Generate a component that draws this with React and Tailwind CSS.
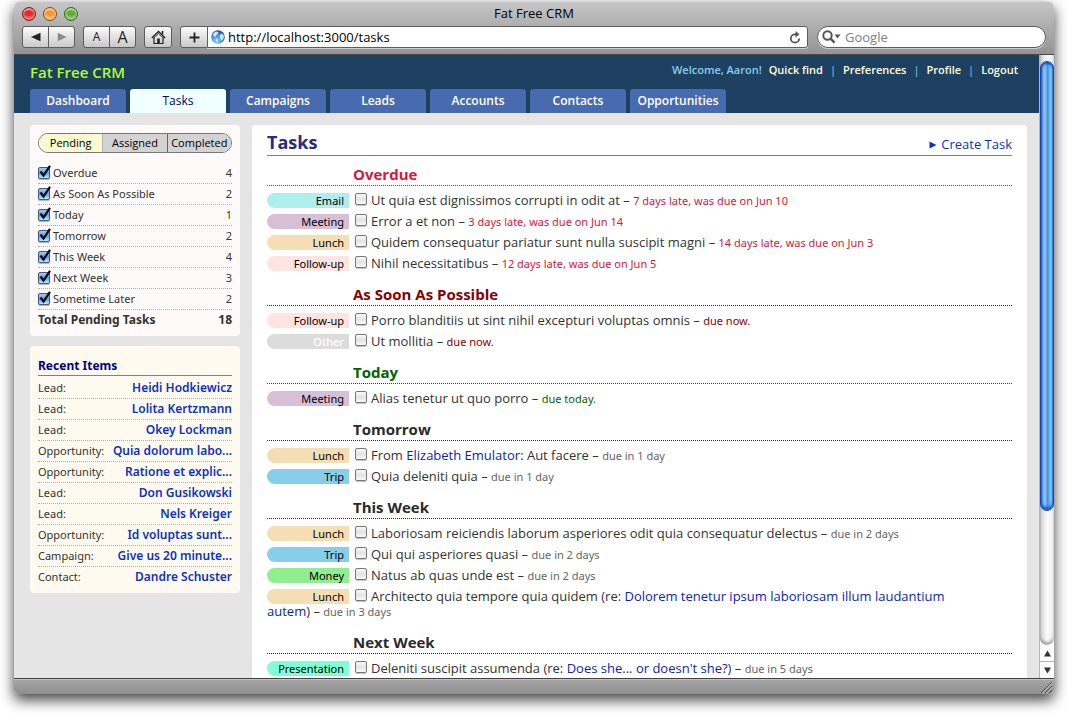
import React from "react";

const NAV = ["Dashboard", "Tasks", "Campaigns", "Leads", "Accounts", "Contacts", "Opportunities"];
const LINKS = ["Quick find", "Preferences", "Profile", "Logout"];

const FILTERS = [
  ["Overdue", 4],
  ["As Soon As Possible", 2],
  ["Today", 1],
  ["Tomorrow", 2],
  ["This Week", 4],
  ["Next Week", 3],
  ["Sometime Later", 2],
];

const RECENT = [
  ["Lead", "Heidi Hodkiewicz"],
  ["Lead", "Lolita Kertzmann"],
  ["Lead", "Okey Lockman"],
  ["Opportunity", "Quia dolorum labo..."],
  ["Opportunity", "Ratione et explic..."],
  ["Lead", "Don Gusikowski"],
  ["Lead", "Nels Kreiger"],
  ["Opportunity", "Id voluptas sunt..."],
  ["Campaign", "Give us 20 minute..."],
  ["Contact", "Dandre Schuster"],
];

const PILL = {
  Email: "bg-[#afeeee] text-black",
  Meeting: "bg-[#d8bfd8] text-black",
  Lunch: "bg-[#f5deb3] text-black",
  "Follow-up": "bg-[#ffe4e1] text-black",
  Other: "bg-[#dcdcdc] font-medium text-white",
  Trip: "bg-[#87ceeb] text-black",
  Money: "bg-[#90ee90] text-black",
  Presentation: "bg-[#7fffd4] text-black",
};

const SECTIONS = [
  {
    title: "Overdue",
    head: "text-[#dc143c] border-[#dc143c]",
    due: "text-[#dc143c]",
    tasks: [
      { type: "Email", text: "Ut quia est dignissimos corrupti in odit at", due: "7 days late, was due on Jun 10" },
      { type: "Meeting", text: "Error a et non", due: "3 days late, was due on Jun 14" },
      { type: "Lunch", text: "Quidem consequatur pariatur sunt nulla suscipit magni", due: "14 days late, was due on Jun 3" },
      { type: "Follow-up", text: "Nihil necessitatibus", due: "12 days late, was due on Jun 5" },
    ],
  },
  {
    title: "As Soon As Possible",
    head: "text-[#8b0000] border-[#8b0000]",
    due: "text-[#8b0000]",
    tasks: [
      { type: "Follow-up", text: "Porro blanditiis ut sint nihil excepturi voluptas omnis", due: "due now." },
      { type: "Other", text: "Ut mollitia", due: "due now." },
    ],
  },
  {
    title: "Today",
    head: "text-[#006400] border-[#006400]",
    due: "text-[#006400]",
    tasks: [{ type: "Meeting", text: "Alias tenetur ut quo porro", due: "due today." }],
  },
  {
    title: "Tomorrow",
    head: "text-[#2a2a2a] border-[#2a2a2a]",
    due: "text-[#666]",
    tasks: [
      { type: "Lunch", text: "From ", link: "Elizabeth Emulator", after: ": Aut facere", due: "due in 1 day" },
      { type: "Trip", text: "Quia deleniti quia", due: "due in 1 day" },
    ],
  },
  {
    title: "This Week",
    head: "text-[#2a2a2a] border-[#2a2a2a]",
    due: "text-[#666]",
    tasks: [
      { type: "Lunch", text: "Laboriosam reiciendis laborum asperiores odit quia consequatur delectus", due: "due in 2 days" },
      { type: "Trip", text: "Qui qui asperiores quasi", due: "due in 2 days" },
      { type: "Money", text: "Natus ab quas unde est", due: "due in 2 days" },
      {
        type: "Lunch",
        text: "Architecto quia tempore quia quidem (re: ",
        link: "Dolorem tenetur ipsum laboriosam illum laudantium autem",
        after: ")",
        due: "due in 3 days",
      },
    ],
  },
  {
    title: "Next Week",
    head: "text-[#2a2a2a] border-[#2a2a2a]",
    due: "text-[#666]",
    tasks: [
      {
        type: "Presentation",
        text: "Deleniti suscipit assumenda (re: ",
        link: "Does she... or doesn't she?",
        after: ")",
        due: "due in 5 days",
      },
    ],
  },
];

const CHROME_BUTTON =
  "flex items-center justify-center border border-[#5c5c5c] bg-linear-to-b from-[#fbfbfb] to-[#c9c9c9] text-[#222]";

function Light({ label, tone }) {
  return (
    <button
      type="button"
      aria-label={label}
      className={`size-3.5 rounded-full border shadow-[inset_0_2px_1px_rgba(255,255,255,0.55),inset_0_-3px_2px_rgba(255,255,255,0.4)] ${tone}`}
    />
  );
}

function Toolbar() {
  return (
    <div className="flex h-[22px] items-stretch gap-2 px-2">
      <div className="flex">
        <button type="button" aria-label="Back" className={`w-[27px] rounded-l-[3px] ${CHROME_BUTTON}`}>
          <svg width="10" height="10" viewBox="0 0 10 10"><path d="M0 5 9.500 .8v8.400z" fill="#222" /></svg>
        </button>
        <button type="button" aria-label="Forward" className={`-ml-px w-[27px] rounded-r-[3px] ${CHROME_BUTTON}`}>
          <svg width="10" height="10" viewBox="0 0 10 10"><path d="M9.500 5 .8 .8v8.400z" fill="#8a8a8a" /></svg>
        </button>
      </div>
      <div className="flex">
        <button type="button" aria-label="Smaller text" className={`w-[27px] rounded-l-[3px] text-[12px] font-medium ${CHROME_BUTTON}`}>A</button>
        <button type="button" aria-label="Larger text" className={`-ml-px w-[27px] rounded-r-[3px] text-[16px] font-medium ${CHROME_BUTTON}`}>A</button>
      </div>
      <button type="button" aria-label="Home" className={`w-7 rounded-[3px] ${CHROME_BUTTON}`}>
        <svg width="15" height="15" viewBox="0 0 15 15" fill="none" stroke="#222">
          <path d="M.8 8 7.500 1.500 14.200 8" strokeWidth="1.300" />
          <path d="M2.800 8 7.500 3.700 12.200 8" strokeWidth=".8" />
          <path d="M3 7.500v6h9v-6" strokeWidth="1.200" />
          <path d="M11.500 4.500V1" strokeWidth="1.600" />
          <path d="M7.500 8.500v5" strokeWidth="2.600" />
        </svg>
      </button>
      <div className="flex min-w-0 flex-1">
        <button type="button" aria-label="Add bookmark" className={`w-7 rounded-l-[3px] ${CHROME_BUTTON}`}>
          <svg width="11" height="11" viewBox="0 0 11 11"><path d="M5.500 .5v10M.5 5.500h10" stroke="#222" strokeWidth="1.800" /></svg>
        </button>
        <div className="-ml-px flex min-w-0 flex-1 items-center gap-[3px] rounded-r-[3px] border border-[#5c5c5c] bg-white px-[3px] shadow-[0_1px_0_#cfcfcf]">
          <svg width="14" height="14" viewBox="0 0 14 14" className="shrink-0">
            <defs>
              <radialGradient id="globe" cx=".4" cy=".8" r=".85">
                <stop offset="0" stopColor="#8fd2fb" />
                <stop offset=".6" stopColor="#3a82d6" />
                <stop offset="1" stopColor="#174487" />
              </radialGradient>
            </defs>
            <circle cx="7" cy="7" r="6.800" fill="url(#globe)" />
            <path d="M2 3.500 5 1.500l2.500.8-.8 2L5 5.200 4.500 7 2.500 6zM8.500 5l2.800-1.500L13 6l-.7 3-2 1.500L9 8zM5 8.500l2.200 1L6.500 12 5 11z" fill="#e6f3ff" opacity=".85" />
          </svg>
          <input
            aria-label="Address"
            defaultValue="http://localhost:3000/tasks"
            className="min-w-0 flex-1 bg-transparent text-[13px] leading-5 text-black outline-none"
          />
          <button type="button" aria-label="Reload" className="pr-[3px]">
            <svg width="12" height="13" viewBox="0 0 12 13">
              <path d="M10.200 7.500A4.200 4.200 0 1 1 6 3.300h1.500" fill="none" stroke="#555" strokeWidth="1.800" />
              <path d="M6.500 0 10.500 3.300 6.500 6.600z" fill="#555" />
            </svg>
          </button>
        </div>
      </div>
      <div className="ml-px flex w-[229px] items-center gap-1 rounded-full border border-[#5c5c5c] bg-white pr-3 pl-1 shadow-[0_1px_0_#cfcfcf]">
        <svg width="19" height="14" viewBox="0 0 19 14" className="shrink-0">
          <circle cx="5.500" cy="5.500" r="4.200" fill="none" stroke="#555" strokeWidth="2" />
          <path d="m8.500 8.500 4 4.200" stroke="#555" strokeWidth="2.400" />
          <path d="M12.500 4.500h6l-3 4z" fill="#555" />
        </svg>
        <input
          aria-label="Search"
          placeholder="Google"
          className="min-w-0 flex-1 bg-transparent text-[13px] leading-5 outline-none placeholder:text-[#808080]"
        />
      </div>
    </div>
  );
}

function Header() {
  return (
    <header className="flex h-[58px] shrink-0 flex-col justify-between bg-[#1f4161] pl-4">
      <div className="flex items-start justify-between pt-[7px] pr-[21px]">
        <h1 className="text-[15px] leading-5 font-semibold text-[#adff2f]">Fat Free CRM</h1>
        <div className="flex gap-[7px] text-[11px] leading-4 font-semibold text-[#87ceeb]">
          <span>Welcome, Aaron!</span>
          {LINKS.map((l, i) => (
            <React.Fragment key={l}>
              {i > 0 && <span className="font-normal">|</span>}
              <a href="#" className="text-[#ffffe0]">{l}</a>
            </React.Fragment>
          ))}
        </div>
      </div>
      <nav className="flex gap-1">
        {NAV.map((n) => (
          <a
            key={n}
            href="#"
            className={`flex h-6 w-24 items-center justify-center rounded-t-[3px] text-[12px] ${
              n === "Tasks" ? "bg-[#f0ffff] font-medium text-[#000080]" : "bg-[#486bb0] font-semibold text-white"
            }`}
          >
            {n}
          </a>
        ))}
      </nav>
    </header>
  );
}

function Sidebar() {
  return (
    <aside className="flex w-[210px] shrink-0 flex-col gap-2.5 self-start font-['Noto_Sans',sans-serif] text-[11px] text-[#333]">
      <section className="rounded bg-[#fffafa] px-2 pt-2 pb-1.5">
        <div className="mb-2.5 flex h-5 overflow-hidden rounded-full border border-[#777] font-['Open_Sans',sans-serif] text-black">
          <button type="button" className="flex-1 bg-[#fafad2]">Pending</button>
          <button type="button" className="flex-1 border-l border-[#b5b5b5] bg-[#d3d3d3]">Assigned</button>
          <button type="button" className="flex-1 border-l border-[#666] bg-[#d3d3d3]">Completed</button>
        </div>
        {FILTERS.map(([name, count]) => (
          <label key={name} className="flex h-[21px] items-center border-b border-dotted border-[#b0b0b0]">
            <span className="relative mr-[3px] flex">
              <input
                type="checkbox"
                defaultChecked
                className="peer size-3 appearance-none rounded-[2px] border border-[#46597f] bg-white shadow-[0_1px_1px_rgba(0,0,0,0.3)] checked:bg-linear-to-b checked:from-[#a9c8ec] checked:via-[#5f9fe4] checked:to-[#b5ecff]"
              />
              <svg width="14" height="14" viewBox="0 0 14 14" className="pointer-events-none absolute -top-0.5 left-0 opacity-0 peer-checked:opacity-100">
                <path d="m2.500 6.500 3 4L12 .8" fill="none" stroke="#0a0a14" strokeWidth="2.200" />
              </svg>
            </span>
            <span className="flex-1">{name}</span>
            <span>{count}</span>
          </label>
        ))}
        <div className="flex h-5 items-center justify-between text-[12px] font-bold">
          <span>Total Pending Tasks</span>
          <span>18</span>
        </div>
      </section>

      <section className="rounded bg-[#fffaf0] px-2 pt-2.5 pb-[5px]">
        <h2 className="mb-0.5 h-5 border-b border-[#808080] text-[12px] leading-5 font-bold text-[#000080]">Recent Items</h2>
        <ul>
          {RECENT.map(([kind, name]) => (
            <li
              key={name}
              className="flex h-[21px] items-center justify-between border-b border-dotted border-[#b0b0b0] last:border-transparent"
            >
              <span>{kind}:</span>
              <a href="#" className="text-[12px] font-semibold text-[#0a32c8]">{name}</a>
            </li>
          ))}
        </ul>
      </section>
    </aside>
  );
}

function Task({ task, dueTone }) {
  return (
    <li className="py-[3px] pr-14 text-[13px] leading-[15px] text-[#333]">
      <span className={`mr-1.5 inline-block w-[82px] rounded-l-full pr-[5px] text-right align-top font-['Noto_Sans',sans-serif] text-[11px] leading-[15px] ${PILL[task.type]}`}>
        {task.type}
      </span>
      <input
        type="checkbox"
        aria-label={task.text}
        className="mr-1 inline-block size-3 appearance-none rounded-[2px] border border-[#777] bg-linear-to-b from-[#fafafa] via-[#e2e2e2] to-[#fafafa] align-top shadow-[0_1px_1px_rgba(0,0,0,0.25)] checked:bg-[#5f9fe4]"
      />
      {task.text}
      {task.link && <a href="#" className="text-[#0a1ec0]">{task.link}</a>}
      {task.after}
      {" – "}
      <span className={`font-['Noto_Sans',sans-serif] text-[11px] leading-3 ${dueTone}`}>{task.due}</span>
    </li>
  );
}

function Main() {
  return (
    <main className="min-w-0 flex-1 rounded-t bg-white px-[15px]">
      <div className="flex h-[31px] items-center justify-between border-b border-[#808080] pt-1">
        <h2 className="text-[18px] leading-6 font-bold text-[#2b2b80]">Tasks</h2>
        <a href="#" className="flex items-center gap-1 pt-1.5 text-[13px] text-[#0a32c8]">
          <svg width="8" height="8" viewBox="0 0 8 8"><path d="M.5 .5 7.500 4l-7 3.500z" fill="#0a32c8" /></svg>
          Create Task
        </a>
      </div>
      {SECTIONS.map((s) => (
        <section key={s.title} className="pt-2.5 first-of-type:pt-2">
          <h3 className={`mb-1 h-[22px] border-b border-dotted pl-[86px] text-[15px] leading-5 font-bold ${s.head}`}>{s.title}</h3>
          <ul>
            {s.tasks.map((t) => (
              <Task key={t.text} task={t} dueTone={s.due} />
            ))}
          </ul>
        </section>
      ))}
    </main>
  );
}

function Scrollbar() {
  return (
    <div aria-hidden="true" className="flex w-[15px] shrink-0 flex-col border-l border-[#b4b4b4] bg-white">
      <div className="flex flex-1 flex-col rounded-b-full bg-linear-to-r from-[#d0d0d0] via-[#fafafa] to-[#f0f0f0] pt-1.5 shadow-[inset_0_-3px_3px_rgba(0,0,0,0.3)]">
        <div className="h-[77%] rounded-full border border-[#1246b0] bg-[linear-gradient(to_right,#2f6fd8,#9cc6f2_25%,#6aaef0_45%,#3f8fe8_55%,#8fd6ff_85%,#4f9be0)] shadow-[inset_0_2px_2px_#1a4fb8,inset_0_-3px_3px_#1a5fd0]" />
      </div>
      <div className="flex h-[17px] items-center justify-center border-b border-[#b4b4b4]">
        <svg width="7" height="7" viewBox="0 0 7 7"><path d="M3.500 .5 7 6.500H0z" fill="#333" /></svg>
      </div>
      <div className="flex h-4 items-center justify-center">
        <svg width="7" height="7" viewBox="0 0 7 7"><path d="M3.500 6.500 7 .5H0z" fill="#333" /></svg>
      </div>
    </div>
  );
}

export default function App() {
  return (
    <div className="h-screen overflow-hidden bg-white px-3.5 pt-px pb-[23px] font-['Open_Sans','Noto_Sans',sans-serif]">
      <div className="flex h-full flex-col overflow-hidden rounded-t-[7px] rounded-b-[5px] shadow-[0_6px_14px_rgba(0,0,0,0.75)]">
        <div className="h-[54px] shrink-0 border-t border-b border-t-[#d8d8d8] border-b-[#4a4a4a] bg-linear-to-b from-[#c6c6c6] to-[#939393]">
          <div className="grid h-6 grid-cols-[1fr_auto_1fr] items-center px-2">
            <div className="flex gap-[7px]">
              <Light label="Close" tone="border-[#7d1c1c] bg-[#e02b2b]" />
              <Light label="Minimize" tone="border-[#8a4a1c] bg-[#f09a30]" />
              <Light label="Zoom" tone="border-[#2f6a1c] bg-[#62ab38]" />
            </div>
            <span className="text-[13px] text-black">Fat Free CRM</span>
          </div>
          <Toolbar />
        </div>
        <div className="flex min-h-0 flex-1">
          <div className="flex min-w-0 flex-1 flex-col overflow-hidden bg-[#e5e5e5]">
            <Header />
            <div className="flex min-h-0 flex-1 gap-3 px-4 pt-3 pr-3">
              <Sidebar />
              <Main />
            </div>
          </div>
          <Scrollbar />
        </div>
        <footer className="flex h-4 shrink-0 items-end justify-end border-t border-[#404040] bg-linear-to-b from-[#a6a6a6] to-[#8e8e8e] shadow-[inset_0_1px_0_#c4c4c4]">
          <svg width="13" height="13" viewBox="0 0 13 13" className="mr-px">
            <path d="M1 12 12 1M5 12l7-7M9 12l3-3" stroke="#4a4a4a" strokeWidth="1" />
            <path d="M2 12.500 12.500 2M6 12.500 12.500 6" stroke="#d0d0d0" strokeWidth=".8" />
          </svg>
        </footer>
      </div>
    </div>
  );
}
